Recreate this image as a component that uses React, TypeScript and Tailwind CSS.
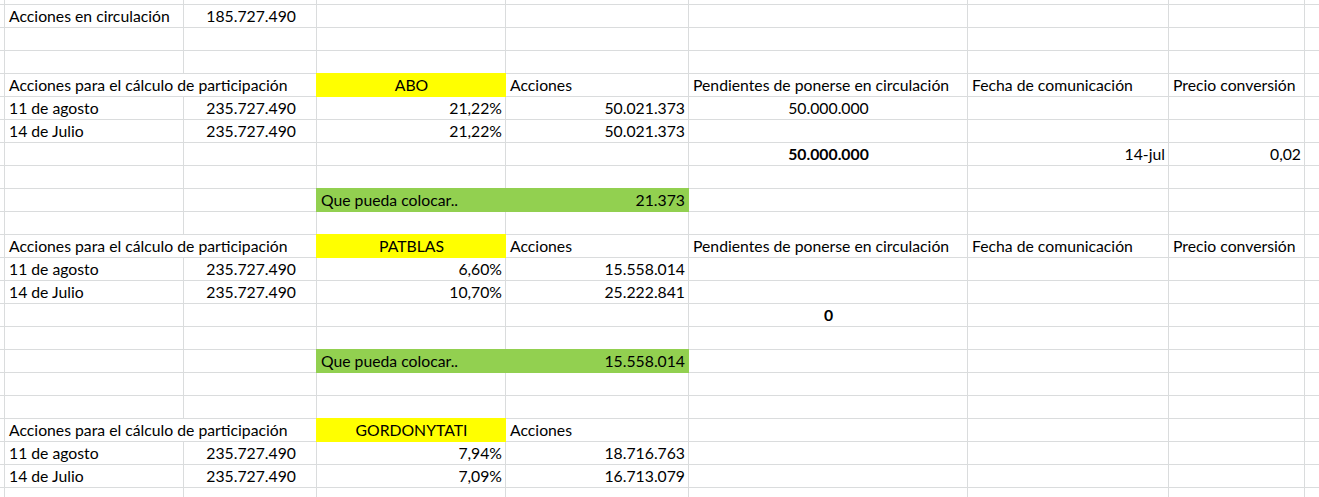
import React from "react";

type Cell = {
  col: number;
  span?: number;
  text?: string;
  align?: "left" | "right" | "center";
  bold?: boolean;
  fill?: "yellow" | "green";
  padRight?: boolean;
};

// 9 columns: edge, A..G, H (partial)
const COLS = 9;

const header = (name: string, full: boolean): Cell[] => [
  { col: 1, span: 2, text: "Acciones para el cálculo de participación" },
  { col: 3, text: name, align: "center", fill: "yellow" },
  { col: 4, text: "Acciones" },
  ...(full
    ? [
        { col: 5, text: "Pendientes de ponerse en circulación" },
        { col: 6, text: "Fecha de comunicación" },
        { col: 7, text: "Precio conversión" },
      ]
    : []),
];

const dataRow = (label: string, pct: string, acc: string, extra: Cell[] = []): Cell[] => [
  { col: 1, text: label },
  { col: 2, text: "235.727.490", align: "right", padRight: true },
  { col: 3, text: pct, align: "right" },
  { col: 4, text: acc, align: "right" },
  ...extra,
];

const green = (): Cell[] => [
  { col: 3, span: 2, text: "Que pueda colocar..", fill: "green", align: "left" },
];

const rows: Cell[][] = [
  [
    { col: 1, text: "Acciones en circulación" },
    { col: 2, text: "185.727.490", align: "right", padRight: true },
  ],
  [],
  [],
  header("ABO", true),
  dataRow("11 de agosto", "21,22%", "50.021.373", [{ col: 5, text: "50.000.000", align: "center" }]),
  dataRow("14 de Julio", "21,22%", "50.021.373"),
  [
    { col: 5, text: "50.000.000", align: "center", bold: true },
    { col: 6, text: "14-jul", align: "right" },
    { col: 7, text: "0,02", align: "right" },
  ],
  [],
  green(),
  [],
  header("PATBLAS", true),
  dataRow("11 de agosto", "6,60%", "15.558.014"),
  dataRow("14 de Julio", "10,70%", "25.222.841"),
  [{ col: 5, text: "0", align: "center", bold: true }],
  [],
  green(),
  [],
  [],
  header("GORDONYTATI", false),
  dataRow("11 de agosto", "7,94%", "18.716.763"),
  dataRow("14 de Julio", "7,09%", "16.713.079"),
];

const greenValues: Record<number, string> = { 8: "21.373", 15: "15.558.014" };

function GridCell({ cell, greenValue }: { cell: Cell; greenValue?: string }) {
  const span = cell.span ?? 1;
  const fillCls =
    cell.fill === "yellow"
      ? "relative z-10 bg-[#ffff00] shadow-[0_0_0_1px_#ffff00]"
      : cell.fill === "green"
      ? "relative z-10 bg-[#92d050] shadow-[0_0_0_1px_#92d050]"
      : "bg-white";
  const alignCls =
    cell.align === "right" ? "justify-end" : cell.align === "center" ? "justify-center" : "justify-start";
  return (
    <div
      className={`${fillCls} flex items-center ${alignCls} whitespace-nowrap overflow-visible pl-[4px] ${
        cell.padRight ? "pr-[20px]" : "pr-[3px]"
      } ${cell.bold ? "font-bold" : ""} ${span === 2 ? "col-span-2" : ""}`}
    >
      {greenValue ? (
        <div className="flex w-full justify-between">
          <span>{cell.text}</span>
          <span>{greenValue}</span>
        </div>
      ) : (
        cell.text
      )}
    </div>
  );
}

export default function App() {
  const out: React.ReactNode[] = [];

  // top partial row
  for (let c = 0; c < COLS; c++) out.push(<div key={`t-${c}`} className="bg-white" />);

  rows.forEach((row, r) => {
    let c = 0;
    while (c < COLS) {
      const cell = row.find((x) => x.col === c);
      if (cell) {
        out.push(<GridCell key={`${r}-${c}`} cell={cell} greenValue={cell.fill === "green" ? greenValues[r] : undefined} />);
        c += cell.span ?? 1;
      } else {
        out.push(<div key={`${r}-${c}`} className="bg-white" />);
        c += 1;
      }
    }
  });

  // bottom partial row
  for (let c = 0; c < COLS; c++) out.push(<div key={`b-${c}`} className="bg-white" />);

  return (
    <div className="h-[497px] w-[1319px] overflow-hidden bg-white">
      <div className="grid h-[497px] grid-cols-[4px_178px_132px_188px_182px_278px_200px_135px_1fr] grid-rows-[4px_repeat(21,22px)_1fr] gap-px bg-[#dadcdd] font-['Lato',sans-serif] text-[15.75px] leading-none text-black">
        {out}
      </div>
    </div>
  );
}
